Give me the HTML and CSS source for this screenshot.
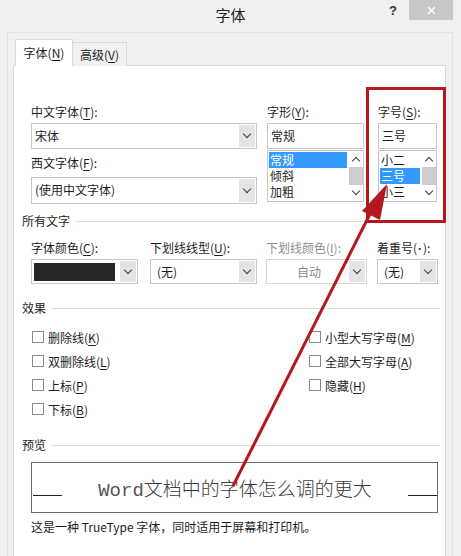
FILE: index.html
```html
<!DOCTYPE html>
<html>
<head>
<meta name="viewport" content="width=device-width, initial-scale=1">
<link rel="stylesheet" href="styles.css">
</head>
<body>
<div class="dialog">
  <div class="titlebar">
    <span></span>
    <span class="title">字体</span>
    <div class="controls">
      <span class="help">?</span>
      <span class="close">
        <svg width="9" height="9" viewBox="0 0 9 9"><path d="M1 1l7 7M8 1l-7 7" stroke="#fff" stroke-width="1.3"/></svg>
      </span>
    </div>
  </div>

  <div class="frame">
    <div class="tabs">
      <div class="tab active">字体(<u>N</u>)</div>
      <div class="tab">高级(<u>V</u>)</div>
    </div>

    <div class="panel">
      <div class="fonts indent">
        <div class="col col-cn">
          <label>中文字体(<u>T</u>):</label>
          <div class="combo"><span class="val">宋体</span><span class="btn"></span></div>
          <label class="second">西文字体(<u>F</u>):</label>
          <div class="combo tall"><span class="val">(使用中文字体)</span><span class="btn"></span></div>
        </div>
        <div class="col col-style">
          <label>字形(<u>Y</u>):</label>
          <div class="field">常规</div>
          <div class="list">
            <div class="items">
              <div class="item sel">常规</div>
              <div class="item">倾斜</div>
              <div class="item">加粗</div>
            </div>
            <div class="scroll"><span class="up"></span><span class="thumb"></span><span class="down"></span></div>
          </div>
        </div>
        <div class="col col-size">
          <label>字号(<u>S</u>):</label>
          <div class="field">三号</div>
          <div class="list">
            <div class="items">
              <div class="item">小二</div>
              <div class="item sel">三号</div>
              <div class="item">小三</div>
            </div>
            <div class="scroll"><span class="up"></span><span class="thumb"></span><span class="down"></span></div>
          </div>
        </div>
      </div>

      <div class="group">所有文字</div>
      <div class="all indent">
        <div class="col w-color">
          <label>字体颜色(<u>C</u>):</label>
          <div class="combo"><span class="swatch"></span><span class="btn"></span></div>
        </div>
        <div class="col w-line">
          <label>下划线线型(<u>U</u>):</label>
          <div class="combo"><span class="val pad">(无)</span><span class="btn"></span></div>
        </div>
        <div class="col w-linecolor disabled">
          <label>下划线颜色(<u>I</u>):</label>
          <div class="combo"><span class="val center">自动</span><span class="btn"></span></div>
        </div>
        <div class="col w-emph">
          <label>着重号(<span class="latin">·</span>):</label>
          <div class="combo"><span class="val pad">(无)</span><span class="btn"></span></div>
        </div>
      </div>

      <div class="group gap-effects">效果</div>
      <div class="effects indent">
        <div class="checks left">
          <div class="check"><span class="box"></span>删除线(<u>K</u>)</div>
          <div class="check"><span class="box"></span>双删除线(<u>L</u>)</div>
          <div class="check"><span class="box"></span>上标(<u>P</u>)</div>
          <div class="check"><span class="box"></span>下标(<u>B</u>)</div>
        </div>
        <div class="checks">
          <div class="check"><span class="box"></span>小型大写字母(<u>M</u>)</div>
          <div class="check"><span class="box"></span>全部大写字母(<u>A</u>)</div>
          <div class="check"><span class="box"></span>隐藏(<u>H</u>)</div>
        </div>
      </div>

      <div class="group gap-preview">预览</div>
      <div class="preview indent">
        <span class="rule"></span>
        <span class="sample"><span class="mono">Word</span>文档中的字体怎么调的更大</span>
        <span class="rule"></span>
      </div>
      <p class="note indent">这是一种 TrueType 字体，同时适用于屏幕和打印机。</p>
    </div>
  </div>

  <svg class="annot" width="461" height="556" viewBox="0 0 461 556">
    <rect x="367.5" y="88.5" width="77" height="133" fill="none" stroke="#b3181d" stroke-width="3"/>
    <line x1="233" y1="486" x2="374" y2="206" stroke="#b3181d" stroke-width="3"/>
    <polygon points="387,184 362,211 380,220" fill="#b3181d"/>
  </svg>
</div>
</body>
</html>
```

FILE: styles.css
```css
* {
  box-sizing: border-box;
}

body {
  margin: 0;
  background-color: #f0f0f0;
  font-family: "Noto Sans CJK SC", "Liberation Sans", sans-serif;
  font-size: 12px;
  color: #1e1e1e;
  overflow: hidden;
}

u {
  text-decoration: underline;
  text-underline-offset: 2px;
}

.latin {
  font-family: "Liberation Sans", sans-serif;
  font-weight: bold;
  padding: 0 1px;
}

.dialog {
  position: relative;
  width: 461px;
  height: 556px;
  overflow: hidden;
}

/* title bar */
.titlebar {
  display: grid;
  grid-template-columns: 1fr auto 1fr;
  height: 32px;
}

.title {
  font-size: 15px;
  line-height: 30px;
  color: #222;
}

.controls {
  display: flex;
  justify-content: flex-end;
  align-items: flex-start;
  margin-right: 8px;
}

.help {
  font-family: "Liberation Sans", sans-serif;
  font-weight: bold;
  font-size: 13px;
  line-height: 22px;
  margin-right: 12px;
  color: #333;
}

.close {
  width: 44px;
  height: 20px;
  background-color: #c7c7c7;
  display: flex;
  align-items: center;
  justify-content: center;
}

/* frame + tabs */
.frame {
  margin: 0 8px 0 7px;
  padding: 6px 6px 0 5px;
  border-left: 1px solid #e2e2e2;
  border-right: 1px solid #e2e2e2;
  border-top: 1px solid #e2e2e2;
}

.tabs {
  display: flex;
  align-items: flex-end;
  padding-left: 2px;
  height: 27px;
  position: relative;
  z-index: 1;
  margin-bottom: -1px;
}

.tab {
  height: 24px;
  width: 54px;
  border: 1px solid #d9d9d9;
  border-bottom: none;
  border-left: none;
  text-align: center;
  line-height: 24px;
  background-color: #f0f0f0;
}

.tab.active {
  height: 27px;
  width: 58px;
  border-left: 1px solid #d9d9d9;
  background-color: #fff;
  line-height: 26px;
}

.panel {
  background-color: #fff;
  border: 1px solid #d9d9d9;
  height: 520px;
  padding: 38px 7px 0 8px;
}

.indent {
  margin-left: 9px;
}

label {
  display: block;
  height: 16px;
  line-height: 16px;
  margin-bottom: 3px;
  white-space: nowrap;
}

/* font row */
.fonts {
  display: flex;
}

.col-cn { width: 226px; }
.col-style { width: 97px; margin-left: 10px; }
.col-size { width: 59px; margin-left: 14px; }

label.second {
  margin-top: 6px;
  margin-bottom: 6px;
}

.combo {
  display: flex;
  height: 26px;
  border: 1px solid #c6c6c6;
  background-color: #fff;
}

.combo.tall {
  height: 27px;
}

.val {
  flex: 1;
  line-height: 24px;
  padding-left: 3px;
  white-space: nowrap;
  overflow: hidden;
}

.val.pad {
  padding-left: 6px;
}

.val.center {
  text-align: center;
  color: #8a8a8a;
}

.btn {
  width: 16px;
  margin: 1px;
  background-color: #e4e4e4;
  display: flex;
  align-items: center;
  justify-content: center;
}

.btn::after,
.up::after,
.down::after {
  content: "";
  width: 5px;
  height: 5px;
  border-right: 1.5px solid #3c3c3c;
  border-bottom: 1.5px solid #3c3c3c;
  transform: translateY(-2px) rotate(45deg);
}

.up::after {
  transform: translateY(2px) rotate(-135deg);
}

.swatch {
  flex: 1;
  margin: 3px 4px 2px 2px;
  background-color: #262626;
}

.field {
  height: 26px;
  border: 1px solid #c6c6c6;
  line-height: 24px;
  padding-left: 3px;
}

.list {
  display: flex;
  height: 52px;
  margin-top: 1px;
  border: 1px solid #c6c6c6;
}

.items {
  flex: 1;
  padding: 1px 2px 0 1px;
}

.item {
  height: 16px;
  line-height: 16px;
  padding-left: 1px;
}

.item.sel {
  background-color: #3399ff;
  color: #fff;
}

.scroll {
  width: 14px;
  display: flex;
  flex-direction: column;
}

.up,
.down {
  height: 16px;
  display: flex;
  align-items: center;
  justify-content: center;
}

.thumb {
  flex: 1;
  background-color: #cdcdcd;
}

/* group headings */
.group {
  display: flex;
  align-items: center;
  height: 16px;
  line-height: 16px;
  margin-top: 9px;
  margin-right: -2px;
}

.group::after {
  content: "";
  flex: 1;
  height: 1px;
  margin-left: 6px;
  background-color: #dcdcdc;
}

.gap-effects,
.gap-preview {
  margin-top: 16px;
}

/* all text row */
.all {
  display: flex;
  margin-top: 11px;
}

.all .combo {
  height: 25px;
  margin-top: 1px;
}

.w-color { width: 107px; }
.w-line { width: 107px; margin-left: 12px; }
.w-linecolor { width: 101px; margin-left: 9px; }
.w-emph { width: 61px; margin-left: 10px; }

.disabled label {
  color: #8d8d8d;
}

.disabled .combo {
  border-color: #d6d6d6;
}

/* effects */
.effects {
  display: flex;
  margin-top: 9px;
}

.checks.left {
  width: 278px;
  padding-left: 1px;
}

.check {
  display: flex;
  align-items: center;
  height: 24px;
}

.box {
  width: 12px;
  height: 12px;
  border: 1px solid #8a8a8a;
  margin-right: 4px;
  background-color: #fff;
}

/* preview */
.preview {
  display: flex;
  align-items: center;
  height: 51px;
  margin-top: 9px;
  border: 1px solid #6e6e6e;
  padding: 0 0 0 1px;
}

.rule {
  width: 29px;
  height: 1px;
  background-color: #222;
  align-self: flex-end;
  margin-bottom: 16px;
}

.sample {
  flex: 1;
  text-align: center;
  font-family: "Noto Sans CJK SC", sans-serif;
  font-size: 19px;
  font-weight: 300;
  color: #3a3a3a;
  white-space: nowrap;
}

.mono {
  font-family: "Liberation Mono", monospace;
  font-weight: normal;
  color: #555;
}

.note {
  margin-top: 6px;
  margin-bottom: 0;
  line-height: 16px;
}

/* red annotation drawn over the dialog */
.annot {
  position: absolute;
  top: 0;
  left: 0;
  pointer-events: none;
}
```
